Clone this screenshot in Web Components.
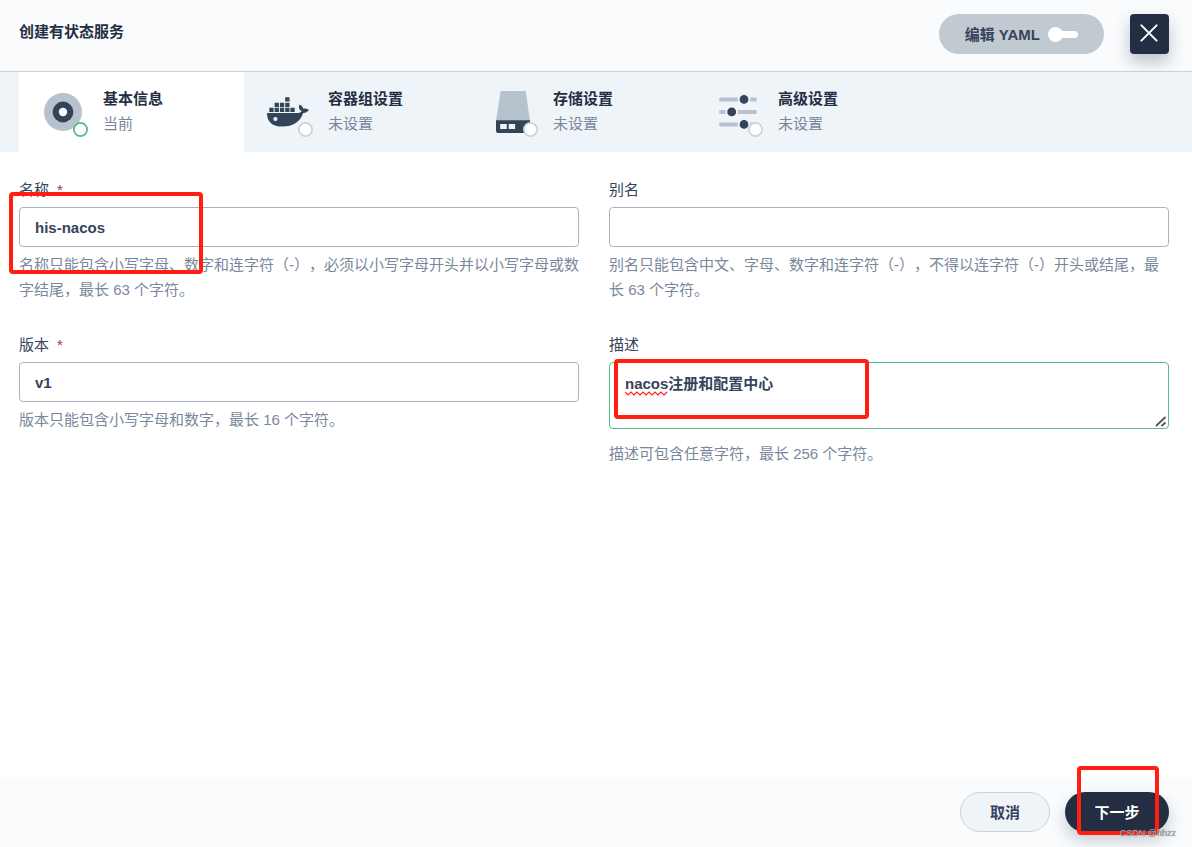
<!DOCTYPE html>
<html lang="zh-CN">
<head>
<meta charset="utf-8">
<title>创建有状态服务</title>
<style>
  :root {
    --ink: #242e42;
    --text: #36435c;
    --muted: #79879c;
    --line: #ccd3db;
    --bar: #eff4f9;
    --pale: #f9fbfd;
    --green: #55bc8a;
    --icon-dark: #324558;
    --icon-light: #b6c2cd;
    --mark: #ff1e10;
  }
  body {
    margin: 0;
    font: 15px/25px "Liberation Sans", "Noto Sans CJK SC", sans-serif;
    color: var(--text);
    background: #fff;
    text-spacing-trim: space-all;
  }
</style>
</head>
<body>
<create-dialog>
  <dialog-header slot="header">创建有状态服务</dialog-header>
  <step-bar slot="steps">
    <step-item icon="base" current>基本信息<span slot="state">当前</span></step-item>
    <step-item icon="docker">容器组设置<span slot="state">未设置</span></step-item>
    <step-item icon="storage">存储设置<span slot="state">未设置</span></step-item>
    <step-item icon="sliders">高级设置<span slot="state">未设置</span></step-item>
  </step-bar>
  <form-field label="名称" required value="his-nacos"><mark-frame slot="mark" style="--x:-10px;--y:-15px;--w:194px;--h:82px"></mark-frame>名称只能包含小写字母、数字和连字符（-），必须以小写字母开头并以小写字母或数字结尾，最长 63 个字符。</form-field>
  <form-field label="别名" value="">别名只能包含中文、字母、数字和连字符（-），不得以连字符（-）开头或结尾，最长 63 个字符。</form-field>
  <form-field label="版本" required value="v1">版本只能包含小写字母和数字，最长 16 个字符。</form-field>
  <form-field label="描述" multiline value="nacos注册和配置中心"><mark-frame slot="mark" style="--x:5px;--y:-3px;--w:255px;--h:60px"></mark-frame>描述可包含任意字符，最长 256 个字符。</form-field>
  <dialog-footer slot="footer"></dialog-footer>
</create-dialog>

<script>
const define = (name, html) => customElements.define(name, class extends HTMLElement {
  connectedCallback() {
    if (this.shadowRoot) return;
    const t = document.createElement('template');
    t.innerHTML = '<style>*{box-sizing:border-box}button,input,textarea{font:inherit;color:inherit;margin:0}</style>' +
      (typeof html === 'function' ? html(this) : html);
    this.attachShadow({ mode: 'open' }).append(t.content.cloneNode(true));
  }
});

define('create-dialog', `
<style>
  :host { display: flex; flex-direction: column; min-height: 100vh; }
  main { flex: 1; display: grid; grid-template-columns: 1fr 1fr; align-content: start; gap: 30px; padding: 25px 23px 25px 19px; }
</style>
<slot name="header"></slot>
<slot name="steps"></slot>
<main><slot></slot></main>
<slot name="footer"></slot>`);

define('dialog-header', `
<style>
  :host { display: block; background: var(--pale); border-bottom: 1px solid var(--line); }
  header { display: flex; align-items: flex-start; padding: 14px 23px 17px 19px; }
  h1 { flex: 1; margin: 0; font-size: 15px; line-height: 36px; font-weight: 700; color: var(--ink); }
  label { display: flex; align-items: center; gap: 8px; height: 40px; padding: 0 26px; border-radius: 20px; background: #c1c9d1; font-weight: 700; cursor: pointer; }
  input { appearance: none; display: flex; align-items: center; width: 30px; height: 15px; }
  input::before { content: ""; width: 15px; height: 15px; border-radius: 50%; background: #fff; }
  input::after { content: ""; flex: 1; height: 7px; margin-left: -4px; border-radius: 4px; background: #fff; }
  button { display: grid; place-items: center; width: 39px; height: 40px; margin-left: 26px; padding: 0; border: 0; border-radius: 4px; background: var(--ink); box-shadow: 0 8px 16px rgba(36,46,66,.28); }
</style>
<header>
  <h1><slot></slot></h1>
  <label>编辑 YAML<input type="checkbox" role="switch"></label>
  <button type="button" aria-label="关闭"><svg width="19" height="20" viewBox="0 0 19 20"><path d="M1.4 1.4 16.6 16.6M16.6 1.4 1.4 16.6" stroke="#fff" stroke-width="2" stroke-linecap="round"/></svg></button>
</header>`);

define('step-bar', `
<style>
  :host { display: block; background: var(--bar); }
  nav { display: flex; padding: 0 19px; }
</style>
<nav><slot></slot></nav>`);

const icons = {
  base: `<circle cx="24" cy="24" r="19" fill="var(--icon-light)"/><circle cx="24" cy="24" r="10.4" fill="var(--icon-dark)"/><circle cx="24" cy="24" r="4.2" fill="#fff"/>`,
  docker: `<g fill="var(--icon-dark)"><path d="M3 25H33.2C35.4 25 37 24.3 37.8 23.2C34.8 21.5 34.2 18.8 35.8 16.4C38 17.7 39 19 39.2 20.7C41.2 20.2 43.2 20.7 44.8 22C43.5 24 41.7 25 39.2 25C36.5 33.5 29 38.6 18.5 38.6C8.5 38.6 3 34 3 25Z"/>
    <path d="M5.3 19.8h4.3v4.2H5.3zM10.6 19.8h4.3v4.2h-4.3zM15.9 19.8h4.3v4.2h-4.3zM21.2 19.8h4.3v4.2h-4.3zM26.4 19.8h4.3v4.2h-4.3zM10.6 14.7h4.3v4.2h-4.3zM15.9 14.7h4.3v4.2h-4.3zM21.2 14.7h4.3v4.2h-4.3zM21.2 9.3h4.3v4.2h-4.3z"/></g><circle cx="11.4" cy="31" r="2.1" fill="var(--bar)"/>`,
  storage: `<path d="M11.7 3H36.7L41 33H7Z" fill="var(--icon-light)"/><path d="M7 32.3H41V43a2 2 0 0 1-2 2H9a2 2 0 0 1-2-2Z" fill="var(--icon-dark)"/><path d="M11.2 36h6.6v5h-6.6zM19.7 36h6.4v5h-6.4z" fill="var(--bar)"/>`,
  sliders: `<path d="M7 11.4H41M7 23.9H41M7 36.4H41" stroke="var(--icon-light)" stroke-width="4" stroke-linecap="round"/>
    <g fill="var(--icon-dark)" stroke="var(--bar)" stroke-width="2"><circle cx="30" cy="11.4" r="5.4"/><circle cx="17.7" cy="23.9" r="5.4"/><circle cx="30" cy="36.4" r="5.4"/></g>`
};

define('step-item', el => `
<style>
  :host { display: flex; align-items: flex-end; gap: 16px; width: 225px; padding: 14px 20px 16px; box-sizing: border-box; }
  :host([current]) { background: #fff; }
  svg { display: block; overflow: visible; }
  strong { display: block; color: var(--ink); }
  .state { color: var(--muted); }
</style>
<svg width="48" height="48" viewBox="0 0 48 48" aria-hidden="true">${icons[el.getAttribute('icon')]}
  <circle cx="41.5" cy="41.5" r="6.6" fill="#fff" stroke="${el.hasAttribute('current') ? 'var(--green)' : 'var(--line)'}" stroke-width="1.8"/></svg>
<div><strong><slot></slot></strong><div class="state"><slot name="state"></slot></div></div>`);

define('form-field', el => {
  const multi = el.hasAttribute('multiline');
  return `
<style>
  :host { display: block; min-width: 0; }
  label { display: block; margin-bottom: 5px; }
  em { margin-left: 8px; font-style: normal; color: #ca2621; }
  .control { position: relative; }
  input, textarea { display: block; width: 100%; border: 1px solid #abb4be; border-radius: 4px; background: #fff; font-weight: 700; outline: 0; }
  input { height: 40px; padding: 0 15px; }
  textarea { height: 67px; padding: 8px 15px; border-color: var(--green); resize: both; }
  textarea::-webkit-resizer { background: url("data:image/svg+xml,%3Csvg xmlns='http://www.w3.org/2000/svg' width='15' height='15'%3E%3Cpath d='M3 13 12.5 4M8.5 13 12.5 9.5' stroke='%23555' stroke-width='1.8'/%3E%3C/svg%3E") right bottom no-repeat; }
  .wave { position: absolute; left: 16px; top: 29px; }
  p { margin: 5px 0 0; color: var(--muted); }
  :host([multiline]) p { margin-top: 12px; }
</style>
<label for="f">${el.getAttribute('label')}${el.hasAttribute('required') ? '<em>*</em>' : ''}</label>
<div class="control">
  ${multi ? `<textarea id="f" spellcheck="false">${el.getAttribute('value')}</textarea>
  <svg class="wave" width="44" height="5" viewBox="0 0 44 5" aria-hidden="true"><path d="M0 1${' l3 3 l3 -3'.repeat(7)}" fill="none" stroke="#f22" stroke-width="1.2"/></svg>`
  : `<input id="f" type="text" value="${el.getAttribute('value')}">`}
  <slot name="mark"></slot>
</div>
<p><slot></slot></p>`;
});

/* Highlight rectangle laid over the control it points at. */
define('mark-frame', `
<style>
  :host { position: absolute; left: var(--x); top: var(--y); width: var(--w); height: var(--h); box-sizing: border-box; border: 4px solid var(--mark); border-radius: 4px; pointer-events: none; z-index: 1; }
</style>`);

define('dialog-footer', `
<style>
  :host { display: block; background: var(--pale); }
  footer { position: relative; display: flex; justify-content: flex-end; gap: 15px; padding: 14px 23px 15px; }
  button { height: 40px; padding: 0 29px; border-radius: 20px; font-weight: 700; }
  .cancel { border: 1px solid var(--line); background: var(--bar); }
  .next { width: 104px; border: 0; background: var(--ink); color: #fff; box-shadow: 0 8px 16px rgba(36,46,66,.24); }
  .wrap { position: relative; }
  small { position: absolute; right: 16px; bottom: 7px; z-index: 2; font-size: 9px; line-height: 14px; color: #a4a8ae; text-shadow: 0 0 1px #6b7078; }
</style>
<footer>
  <button type="button" class="cancel">取消</button>
  <div class="wrap"><button type="button" class="next">下一步</button>
    <mark-frame style="--x:12px;--y:-26px;--w:82px;--h:69px"></mark-frame></div>
  <small>CSDN @hhzz</small>
</footer>`);
</script>
</body>
</html>
